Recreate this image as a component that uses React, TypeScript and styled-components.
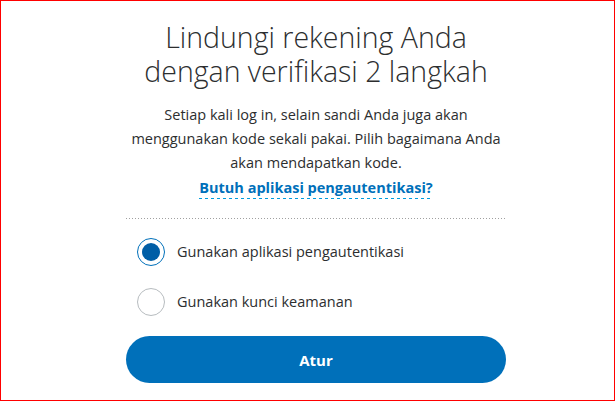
import React, { useState } from "react";
import styled, { createGlobalStyle } from "styled-components";

const Global = createGlobalStyle`
  html, body { margin: 0; padding: 0; background: #fff; }
  * { box-sizing: border-box; }
`;

const Frame = styled.div`
  width: 615px;
  height: 401px;
  border: 1px solid #ff0000;
  padding: 19px 0 0 125px;
  font-family: "Open Sans", "Noto Sans", sans-serif;
  color: #2c2e2f;
`;

const Column = styled.div`
  width: 380px;
  display: flex;
  flex-direction: column;
  align-items: center;
`;

const Title = styled.h1`
  margin: 0;
  font-weight: 300;
  font-size: 28.5px;
  line-height: 34px;
  text-align: center;
  color: #2c2e2f;
`;

const Intro = styled.p`
  margin: 15px 0 0;
  width: 380px;
  font-size: 14.5px;
  line-height: 24px;
  text-align: center;
`;

const LinkLine = styled.div`
  margin-top: 1px;
  font-size: 14.5px;
  line-height: 24px;
  text-align: center;
`;

const HelpLink = styled.a`
  color: #0070ba;
  font-weight: 700;
  text-decoration: none;
  padding-bottom: 2px;
  background-image: repeating-linear-gradient(to right, #009cde 0 3px, transparent 3px 6px);
  background-size: 100% 1px;
  background-repeat: no-repeat;
  background-position: left bottom;
`;

const Divider = styled.div`
  align-self: stretch;
  margin-top: 18px;
  height: 1px;
  background-image: repeating-linear-gradient(to right, #a0a0a0 0 1px, transparent 1px 3px);
`;

const Options = styled.div`
  align-self: stretch;
  display: flex;
  flex-direction: column;
  gap: 22px;
  margin-top: 19px;
  padding-left: 11px;
`;

const Option = styled.label`
  display: flex;
  align-items: center;
  gap: 12px;
  font-size: 14.5px;
  line-height: 28px;
  cursor: pointer;
`;

const Radio = styled.span<{ $checked: boolean }>`
  position: relative;
  width: 28px;
  height: 28px;
  flex: none;
  border-radius: 50%;
  border: ${(p) => (p.$checked ? "1.5px solid #0070ba" : "1px solid #b7bcbf")};
  background: #fff;
  &::after {
    content: "";
    position: absolute;
    inset: 4px;
    border-radius: 50%;
    background: #005ea6;
    display: ${(p) => (p.$checked ? "block" : "none")};
  }
`;

const Button = styled.button`
  align-self: stretch;
  margin-top: 20px;
  height: 47px;
  border: none;
  border-radius: 24px;
  background: #0070ba;
  color: #fff;
  font-family: "Open Sans", "Noto Sans", sans-serif;
  font-weight: 700;
  font-size: 15px;
  cursor: pointer;
`;

export default function App() {
  const [choice, setChoice] = useState("app");
  return (
    <>
      <Global />
      <Frame>
        <Column>
          <Title>
            Lindungi rekening Anda
            <br />
            dengan verifikasi 2 langkah
          </Title>
          <Intro>
            Setiap kali log in, selain sandi Anda juga akan
            <br />
            menggunakan kode sekali pakai. Pilih bagaimana Anda
            <br />
            akan mendapatkan kode.
          </Intro>
          <LinkLine>
            <HelpLink href="#">Butuh aplikasi pengautentikasi?</HelpLink>
          </LinkLine>
          <Divider />
          <Options>
            <Option onClick={() => setChoice("app")}>
              <Radio $checked={choice === "app"} />
              Gunakan aplikasi pengautentikasi
            </Option>
            <Option onClick={() => setChoice("key")}>
              <Radio $checked={choice === "key"} />
              Gunakan kunci keamanan
            </Option>
          </Options>
          <Button>Atur</Button>
        </Column>
      </Frame>
    </>
  );
}
